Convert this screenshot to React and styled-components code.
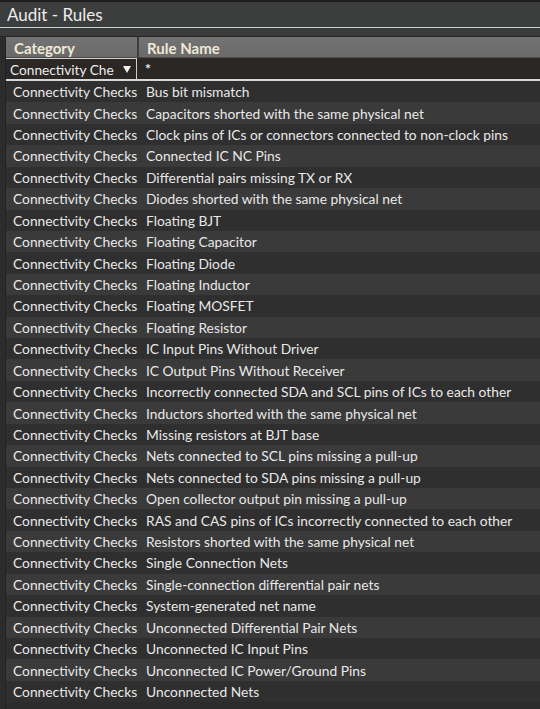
import React from 'react';
import styled, { createGlobalStyle } from 'styled-components';

const Global = createGlobalStyle`
  html, body { margin: 0; padding: 0; background: #2c2c2c; }
  body { font-family: Lato, "Liberation Sans", sans-serif; }
`;

const rules = [
  'Bus bit mismatch',
  'Capacitors shorted with the same physical net',
  'Clock pins of ICs or connectors connected to non-clock pins',
  'Connected IC NC Pins',
  'Differential pairs missing TX or RX',
  'Diodes shorted with the same physical net',
  'Floating BJT',
  'Floating Capacitor',
  'Floating Diode',
  'Floating Inductor',
  'Floating MOSFET',
  'Floating Resistor',
  'IC Input Pins Without Driver',
  'IC Output Pins Without Receiver',
  'Incorrectly connected SDA and SCL pins of ICs to each other',
  'Inductors shorted with the same physical net',
  'Missing resistors at BJT base',
  'Nets connected to SCL pins missing a pull-up',
  'Nets connected to SDA pins missing a pull-up',
  'Open collector output pin missing a pull-up',
  'RAS and CAS pins of ICs incorrectly connected to each other',
  'Resistors shorted with the same physical net',
  'Single Connection Nets',
  'Single-connection differential pair nets',
  'System-generated net name',
  'Unconnected Differential Pair Nets',
  'Unconnected IC Input Pins',
  'Unconnected IC Power/Ground Pins',
  'Unconnected Nets',
];

const Window = styled.div`
  width: 540px;
  height: 709px;
  overflow: hidden;
  background: #2c2c2c;
  display: flex;
  flex-direction: column;
`;

const TitleBar = styled.div`
  height: 25px;
  border-top: 2px solid #1f1f1f;
  background: #3c3e3e;
  display: flex;
  align-items: center;
  padding-left: 7px;
  border-bottom: 1px solid #cfd0cf;
`;

const Title = styled.span`
  font-size: 17px;
  color: #ececec;
`;

const Gap = styled.div`
  height: 8px;
  background: #3a3c3c;
  border-bottom: 1px solid #262626;
`;

const Table = styled.div`
  margin-left: 5px;
  border-left: 1px solid #222;
  flex: 1;
  display: flex;
  flex-direction: column;
`;

const Grid = styled.div`
  display: grid;
  grid-template-columns: 131px 1fr;
`;

const HeaderRow = styled(Grid)`
  height: 20px;
  background: linear-gradient(#737373, #6a6a6a);
  border-bottom: 1px solid #4a4a4a;
`;

const HeaderCell = styled.div`
  display: flex;
  align-items: center;
  padding: 1px 0 0 8px;
  font-weight: 700;
  font-size: 15px;
  color: #efe9d6;
  border-left: ${p => (p.first ? 'none' : '2px solid #3e3e3e')};
`;

const FilterRow = styled(Grid)`
  height: 21px;
  background: #2a2725;
  border-bottom: 2px solid #d8d8d8;
`;

const FilterSelect = styled.div`
  display: flex;
  align-items: center;
  justify-content: space-between;
  padding: 0 5px 0 4px;
  border: 1px solid #d0d0d0;
  border-bottom: none;
  border-left: none;
  font-size: 13.7px;
  color: #ececec;
  white-space: nowrap;
  overflow: hidden;
`;

const FilterText = styled.div`
  display: flex;
  align-items: center;
  padding-left: 8px;
  font-size: 14px;
  font-weight: 700;
  color: #ececec;
`;

const Arrow = styled.svg`
  width: 8px;
  height: 7px;
  flex-shrink: 0;
  margin-left: 4px;
`;

const Row = styled(Grid)`
  height: 21.43px;
  background: ${p => (p.alt ? '#3a3a3a' : '#2f2f2f')};
  font-size: 13.8px;
  color: #e8e8e8;
`;

const Cell = styled.div`
  display: flex;
  align-items: center;
  padding-left: ${p => (p.first ? '7px' : '9px')};
  white-space: nowrap;
  overflow: visible;
`;

export default function App() {
  return (
    <Window>
      <Global />
      <TitleBar>
        <Title>Audit - Rules</Title>
      </TitleBar>
      <Gap />
      <Table>
        <HeaderRow>
          <HeaderCell first>Category</HeaderCell>
          <HeaderCell>Rule Name</HeaderCell>
        </HeaderRow>
        <FilterRow>
          <FilterSelect>
            <span>Connectivity Che</span>
            <Arrow viewBox="0 0 8 7">
              <path d="M0 0 H8 L4 7 Z" fill="#f2f2f2" />
            </Arrow>
          </FilterSelect>
          <FilterText>*</FilterText>
        </FilterRow>
        {rules.map((r, i) => (
          <Row key={r} alt={i % 2 === 1}>
            <Cell first>Connectivity Checks</Cell>
            <Cell>{r}</Cell>
          </Row>
        ))}
      </Table>
    </Window>
  );
}
